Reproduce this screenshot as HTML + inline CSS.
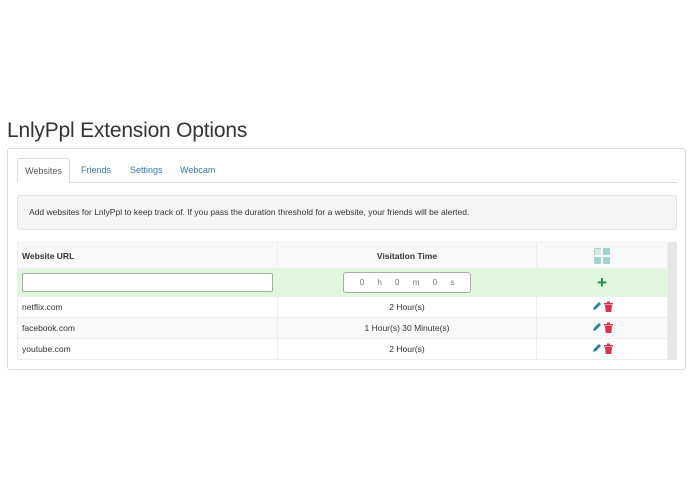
<!DOCTYPE html>
<html><head><style>
body{margin:0;background:#fff;font-family:"Liberation Sans",sans-serif;color:#333;width:695px;height:494px;position:relative;overflow:hidden}
.a{position:absolute}
h1{position:absolute;left:7px;top:117px;margin:0;font-weight:normal;font-size:21px;line-height:28px;color:#333;letter-spacing:-0.2px}
.panel{left:7px;top:148px;width:679px;height:222px;border:1px solid #ddd;border-radius:3px;box-sizing:border-box}
.tabline{left:17px;top:182px;width:660px;height:1px;background:#ddd}
.tab{top:158px;height:25px;font-size:9px;line-height:25px;color:#337ab7}
.tab.act{left:17px;width:53px;border:1px solid #ddd;border-bottom:1px solid #fff;background:#fff;color:#555;text-align:center;box-sizing:border-box;border-radius:3px 3px 0 0}
.alert{left:17px;top:195px;width:660px;height:35px;background:#f5f5f5;border:1px solid #e3e3e3;border-radius:3px;box-sizing:border-box;font-size:8.5px;line-height:33px;padding-left:11px;color:#333}
table{position:absolute;left:17px;top:242px;width:651px;border-collapse:collapse;font-size:8.5px}
td,th{border:1px solid #eee;padding:0 4px}
th{height:25px;background:#f9f9f9;font-weight:bold}
.scr{left:668px;top:242px;width:9px;height:118px;background:#e6e6e6}
</style></head><body>
<h1>LnlyPpl Extension Options</h1>
<div class="a panel"></div>
<div class="a tabline"></div>
<div class="a tab act">Websites</div>
<div class="a tab" style="left:81px">Friends</div>
<div class="a tab" style="left:130px">Settings</div>
<div class="a tab" style="left:180px">Webcam</div>
<div class="a alert">Add websites for LnlyPpl to keep track of. If you pass the duration threshold for a website, your friends will be alerted.</div>
<table>
<tr><th style="width:251px;text-align:left">Website URL</th><th style="width:250px">Visitation Time</th><th><svg width="16" height="16" viewBox="0 0 16 16" style="vertical-align:middle"><rect x="0" y="0" width="16" height="16" fill="#9fd3cf" rx="1"/><rect x="7" y="0" width="2" height="16" fill="#fff"/><rect x="0" y="7" width="16" height="2" fill="#fff"/><rect x="1" y="1" width="6" height="6" fill="#cfe9e7"/></svg></th></tr>
<tr style="background:#dff8dc;height:28px"><td><div style="height:17px;border:1px solid #aaa;border-radius:2px;background:#fff"></div></td><td style="text-align:center"><div style="display:inline-block;width:126px;height:19px;border:1px solid #aaa;border-radius:3px;background:#fff;font-size:8px;line-height:19px;color:#777;word-spacing:11px">0 h 0 m 0 s</div></td><td style="text-align:center;color:#1e8c4a;font-size:17px;font-weight:bold">+</td></tr>
<tr style="height:21px"><td>netflix.com</td><td style="text-align:center">2 Hour(s)</td><td style="text-align:center" class="ic"></td></tr>
<tr style="height:21px;background:#f9f9f9"><td>facebook.com</td><td style="text-align:center">1 Hour(s) 30 Minute(s)</td><td style="text-align:center" class="ic"></td></tr>
<tr style="height:21px"><td>youtube.com</td><td style="text-align:center">2 Hour(s)</td><td style="text-align:center" class="ic"></td></tr>
</table>
<div class="a scr"></div>
<svg class="a" style="left:592px;top:301px" width="22" height="60" viewBox="0 0 22 60">
<g id="i"><path d="M1 9 L2 6 L7 1 L9 3 L4 8 Z" fill="#2a7fa8"/><path d="M12 2 h9 v1.5 h-9z M13 4 h7 l-0.7 7 h-5.6z" fill="#d9324f"/><rect x="15" y="0.5" width="3" height="1.5" fill="#d9324f"/></g>
<use href="#i" y="21"/><use href="#i" y="42"/>
</svg>
</body></html>
